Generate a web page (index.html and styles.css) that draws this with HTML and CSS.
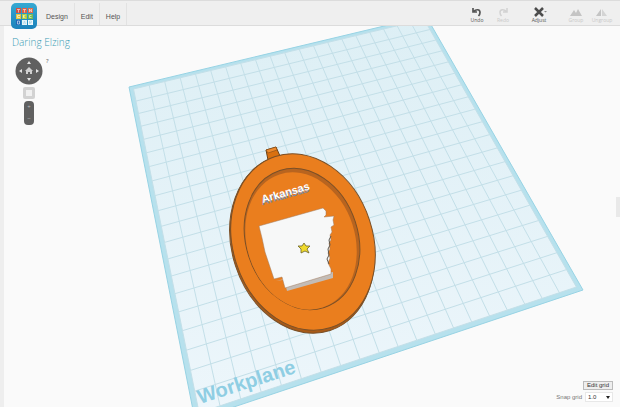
FILE: index.html
```html
<!DOCTYPE html>
<html lang="en">
<head>
    <meta charset="UTF-8">
    <meta name="viewport" content="width=device-width, initial-scale=1.0">
    <title>Daring Elzing</title>
    <link rel="stylesheet" href="styles.css">
</head>
<body>
    <header class="toolbar">
        <a href="#" class="logo" aria-label="Home">
            <svg viewBox="0 0 26 26" width="26" height="26">
                <defs>
                    <linearGradient id="logoFill" x1="0" y1="0" x2="0" y2="1">
                        <stop offset="0" stop-color="#35a9d2"/>
                        <stop offset="1" stop-color="#1b82bb"/>
                    </linearGradient>
                </defs>
                <rect width="26" height="26" rx="5" fill="url(#logoFill)"/>
                <g>
                    <rect x="5" y="5" width="5" height="5" fill="#d4503f"/>
                    <rect x="11" y="5" width="5" height="5" fill="#dd6048"/>
                    <rect x="17" y="5" width="5" height="5" fill="#e06c4c"/>
                    <rect x="5" y="11" width="5" height="5" fill="#e8c53e"/>
                    <rect x="11" y="11" width="5" height="5" fill="#b5cc3c"/>
                    <rect x="17" y="11" width="5" height="5" fill="#77bb50"/>
                    <rect x="5" y="17" width="5" height="5" fill="#1f66b4"/>
                    <rect x="11" y="17" width="5" height="5" fill="#e4f2f7"/>
                    <rect x="17" y="17" width="5" height="5" fill="#f2fafc"/>
                </g>
                <g fill="none" stroke="#fff" stroke-width="0.700" opacity="0.800">
                    <path d="M6 6.500h3M7.500 6.500v3M12 6.500h3M13.500 6.500v3M18.500 9v-3l2 3v-3"/>
                    <path d="M9 12.500H6.500v2H9M12.500 12v3M12.500 13.500l2-1.500M12.500 13.500l2 1.500M20.500 12.500h-2v2h2"/>
                    <path d="M6.500 21v-3h2v3z"/>
                </g>
                <path d="M12.500 21l1-3 1 3M18.500 21v-3h2v1.500h-2l2 1.500" fill="none" stroke="#a4d3e6" stroke-width="0.700"/>
            </svg>
        </a>
        <nav class="menu">
            <button type="button">Design</button>
            <button type="button">Edit</button>
            <button type="button">Help</button>
        </nav>
        <div class="tools">
            <button type="button" class="tool">
                <svg viewBox="0 0 14 10" width="14" height="10">
                    <path d="M3 1v4h4M3.500 4.500C6 2 10 2 10 5.500c0 1.500-.5 2.500-1.500 3.500" fill="none" stroke="#555" stroke-width="1.700"/>
                </svg>
                Undo
            </button>
            <button type="button" class="tool" disabled>
                <svg viewBox="0 0 14 10" width="14" height="10">
                    <path d="M11 1v4H7M10.500 4.500C8 2 4 2 4 5.500c0 1.500.5 2.500 1.500 3.500" fill="none" stroke="#d2d2d2" stroke-width="1.500"/>
                </svg>
                Redo
            </button>
            <button type="button" class="tool adjust">
                <svg viewBox="0 0 16 10" width="16" height="10">
                    <path d="M4 1l8 8M12 1L4 9" fill="none" stroke="#4c4c4c" stroke-width="2.500"/>
                    <path d="M13 4h3l-1.500 1.500z" fill="#888"/>
                </svg>
                Adjust
            </button>
            <button type="button" class="tool group" disabled>
                <svg viewBox="0 0 14 10" width="14" height="10">
                    <path d="M1 9l4-6 2 3 2-4 4 7z" fill="#c4c4c4"/>
                </svg>
                Group
            </button>
            <button type="button" class="tool" disabled>
                <svg viewBox="0 0 14 10" width="14" height="10">
                    <path d="M1 9l5-7v7z" fill="#c4c4c4"/>
                    <path d="M7 2l5 7H7z" fill="#d4d4d4"/>
                </svg>
                Ungroup
            </button>
        </div>
    </header>

    <main class="workspace">
        <svg class="scene" viewBox="0 26 620 381" preserveAspectRatio="xMinYMin slice" role="img" aria-label="Arkansas pendant on the workplane">
            <defs>
                <linearGradient id="planeFill" x1="0" y1="0" x2="0" y2="1">
                    <stop offset="0" stop-color="#ddeff5"/>
                    <stop offset="1" stop-color="#edf6fb"/>
                </linearGradient>
            </defs>
            <polygon id="border" fill="#b7e1ed" stroke="#97d3e4"/>
            <polygon id="plane" fill="url(#planeFill)"/>
            <path id="major" fill="none" stroke="#c3dfe8" stroke-width="1"/>
            <text class="plane-label" transform="translate(200 404) rotate(-18)">Workplane</text>

            <!-- pendant: loop, side wall, top face, recess -->
            <path d="M268 160l-2-10 10-3 4 9z" fill="#d9700f" stroke="#6e4216"/>
            <path d="M266 150l10-3 1 3-9 3z" fill="#ee8a2d" stroke="#6e4216" stroke-width="0.500"/>
            <g stroke="#7a5028">
                <ellipse cx="302" cy="244" rx="70" ry="91" transform="rotate(-18 302 244)" fill="#a85a18"/>
                <ellipse cx="303" cy="242" rx="70" ry="90" transform="rotate(-18 303 242)" fill="#ea7e1e"/>
                <ellipse cx="302" cy="239" rx="56" ry="72" transform="rotate(-18 302 239)" fill="#b8641f"/>
            </g>
            <ellipse cx="301" cy="241" rx="54" ry="70" transform="rotate(-18 301 241)" fill="#ea7e1e"/>

            <path d="M276 281l8-2 3 12 46-13v-6z" fill="#c3bcb6"/>
            <path d="M259 226l64-18 3 3v4l-2 2 10-1-1 4 1 5-3 2 1 5-2 3 1 5-2 3 1 6-2 4 2 5-2 5 3 6 0 5-46 14-3-11-8 2-9-27-3-14z" fill="#f7f8f8" stroke="#a07b5c" stroke-width="0.500"/>
            <path d="M331 236l-2 4 1 5-2 4 1 6-2 4 2 5" fill="none" stroke="#5b564e"/>
            <path d="M304 243l2 3 4 0-3 3 2 4-4-2-4 2 0-4-3-3 4 0z" fill="#f0da2c" stroke="#6c6429" stroke-width="0.800"/>
            <g transform="translate(263 204) rotate(-16)">
                <text class="model-label shade" x="-1" y="1">Arkansas</text>
                <text class="model-label" x="0" y="-1">Arkansas</text>
            </g>
        </svg>

        <section class="side">
            <h1>Daring Elzing</h1>
            <div class="view">
                <div class="nav-controls">
                    <button type="button" class="orbit" aria-label="Rotate view">
                        <svg viewBox="0 0 28 28" width="28" height="28">
                            <circle cx="14" cy="14" r="13.500" fill="#606060"/>
                            <path d="M14 4l2 3h-4zM14 24l2-3h-4zM4 14l3-2v4zM24 14l-3-2v4z" fill="#e4e4e4"/>
                            <path d="M14 10l4 4h-1v3h-2v-2h-2v2h-2v-3h-1z" fill="#d0d0d0"/>
                        </svg>
                    </button>
                    <button type="button" class="fit" aria-label="Fit view"></button>
                    <div class="zoom">
                        <button type="button" aria-label="Zoom in">+</button>
                        <button type="button" aria-label="Zoom out">−</button>
                    </div>
                </div>
                <button type="button" class="help">?</button>
            </div>
        </section>

        <button type="button" class="drawer" aria-label="Open panel"></button>

        <div class="grid-settings">
            <button type="button" class="edit-grid">Edit grid</button>
            <div class="snap">
                <label for="snap">Snap grid</label>
                <select id="snap">
                    <option>1.0</option>
                    <option>0.5</option>
                    <option>2.0</option>
                </select>
            </div>
        </div>
    </main>

    <script src="script.js"></script>
</body>
</html>
```

FILE: styles.css
```css
* {
    margin: 0;
    padding: 0;
    box-sizing: border-box;
}

body {
    font-family: "Open Sans", Arial, sans-serif;
    background-color: #fafafa;
    color: #555;
    height: 100vh;
    display: flex;
    flex-direction: column;
    overflow: hidden;
}

button {
    font: inherit;
    color: inherit;
    border: none;
    background: none;
    cursor: pointer;
}

.toolbar {
    display: flex;
    align-items: stretch;
    height: 26px;
    padding: 2px 5px 0 11px;
    background-color: #efefef;
    border-top: 1px solid #dcdcdc;
    border-bottom: 1px solid #dcdcdc;
    position: relative;
    z-index: 1;
}

.logo {
    width: 26px;
    height: 26px;
}

.logo svg {
    display: block;
}

.menu {
    display: flex;
    margin-left: 3px;
}

.menu button {
    padding: 4px 6px 0;
    font-family: "Liberation Sans", Arial, sans-serif;
    font-size: 7px;
    border-right: 1px solid #e2e2e2;
}

.tools {
    display: flex;
    margin-left: auto;
}

.tool {
    display: flex;
    flex-direction: column;
    align-items: center;
    width: 26px;
    padding-top: 4px;
    font-size: 5px;
    line-height: 7px;
}

.tool:disabled {
    color: #c8c8c8;
}

.adjust {
    margin-left: 10px;
}

.group {
    margin-left: 11px;
}

.workspace {
    flex: 1;
    display: flex;
    justify-content: space-between;
    position: relative;
    min-height: 0;
    border-left: 4px solid #eee;
}

/* the scene fills the whole area behind the controls */
.scene {
    position: absolute;
    top: 0;
    left: -4px;
    width: calc(100% + 4px);
    height: 100%;
}

.plane-label {
    font: bold 20px "Liberation Sans", Arial, sans-serif;
    fill: #8fcee3;
}

.model-label {
    font: bold 11px "Liberation Sans", Arial, sans-serif;
    fill: #fff;
}

.shade {
    fill: #7c8aa5;
}

.side {
    position: relative;
    padding: 9px 8px;
}

h1 {
    font-size: 10px;
    line-height: 14px;
    font-weight: 300;
    color: #3a9db5;
}

.view {
    display: flex;
    align-items: flex-start;
    gap: 3px;
    padding: 8px 3px;
}

.nav-controls {
    display: flex;
    flex-direction: column;
    align-items: center;
    gap: 2px;
}

.orbit {
    height: 28px;
}

.orbit svg {
    display: block;
}

.fit {
    width: 12px;
    height: 12px;
    background-color: #f0f0f0;
    border: 3px solid #d2d2d2;
    border-radius: 2px;
}

.zoom {
    display: flex;
    flex-direction: column;
    width: 10px;
    height: 24px;
    border-radius: 4px;
    background-color: #606060;
    color: #bbb;
}

.zoom button {
    flex: 1;
    font-size: 6px;
    line-height: 12px;
}

.help {
    font-size: 6px;
    line-height: 8px;
}

.drawer {
    position: absolute;
    top: 171px;
    right: 0;
    width: 4px;
    height: 20px;
    background-color: #e9e9e9;
}

.grid-settings {
    position: relative;
    align-self: flex-end;
    display: flex;
    flex-direction: column;
    align-items: flex-end;
    gap: 2px;
    padding: 0 7px 5px;
    font-family: "Liberation Sans", Arial, sans-serif;
    font-size: 6px;
}

.edit-grid {
    height: 9px;
    padding: 0 3px;
    line-height: 7px;
    color: #333;
    background-color: #eee;
    border: 1px solid #bbb;
}

.snap {
    display: flex;
    align-items: center;
    gap: 3px;
    color: #777;
}

#snap {
    appearance: none;
    width: 28px;
    height: 10px;
    padding-left: 2px;
    font: inherit;
    color: #333;
    border: 1px solid #e8e8e8;
    background: #fff url("data:image/svg+xml,%3Csvg xmlns='http://www.w3.org/2000/svg' viewBox='0 0 4 3'%3E%3Cpath d='M0 0h4L2 3z' fill='%23222'/%3E%3C/svg%3E") no-repeat right 2px center / 4px 3px;
}
```

FILE: script.js
```js
// Corners of the workplane: top left, top right, bottom right, bottom left
const corners = [[129, 87], [426, 16], [583, 290], [195, 420]];
const CELLS = 20;

// Maps a point of the unit square onto the plane seen in perspective
function project(u, v) {
    const [[x0, y0], [x1, y1], [x2, y2], [x3, y3]] = corners;
    const dx1 = x1 - x2, dx2 = x3 - x2, sx = x0 - x1 + x2 - x3;
    const dy1 = y1 - y2, dy2 = y3 - y2, sy = y0 - y1 + y2 - y3;
    const det = dx1 * dy2 - dx2 * dy1;
    const g = (sx * dy2 - dx2 * sy) / det;
    const h = (dx1 * sy - sx * dy1) / det;
    const w = g * u + h * v + 1;
    const x = ((x1 - x0 + g * x1) * u + (x3 - x0 + h * x3) * v + x0) / w;
    const y = ((y1 - y0 + g * y1) * u + (y3 - y0 + h * y3) * v + y0) / w;
    return x.toFixed(1) + ',' + y.toFixed(1);
}

function quad(a, b) {
    return [project(a, a), project(b, a), project(b, b), project(a, b)].join(' ');
}

const lo = 0.012;
const hi = 1 - lo;

function lines(count) {
    let d = '';
    for (let i = 0; i <= count; i++) {
        const t = lo + (hi - lo) * i / count;
        d += `M${project(t, lo)}L${project(t, hi)}`;
        d += `M${project(lo, t)}L${project(hi, t)}`;
    }
    return d;
}

document.getElementById('border').setAttribute('points', quad(0, 1));
document.getElementById('plane').setAttribute('points', quad(lo, hi));
document.getElementById('major').setAttribute('d', lines(CELLS));
```
